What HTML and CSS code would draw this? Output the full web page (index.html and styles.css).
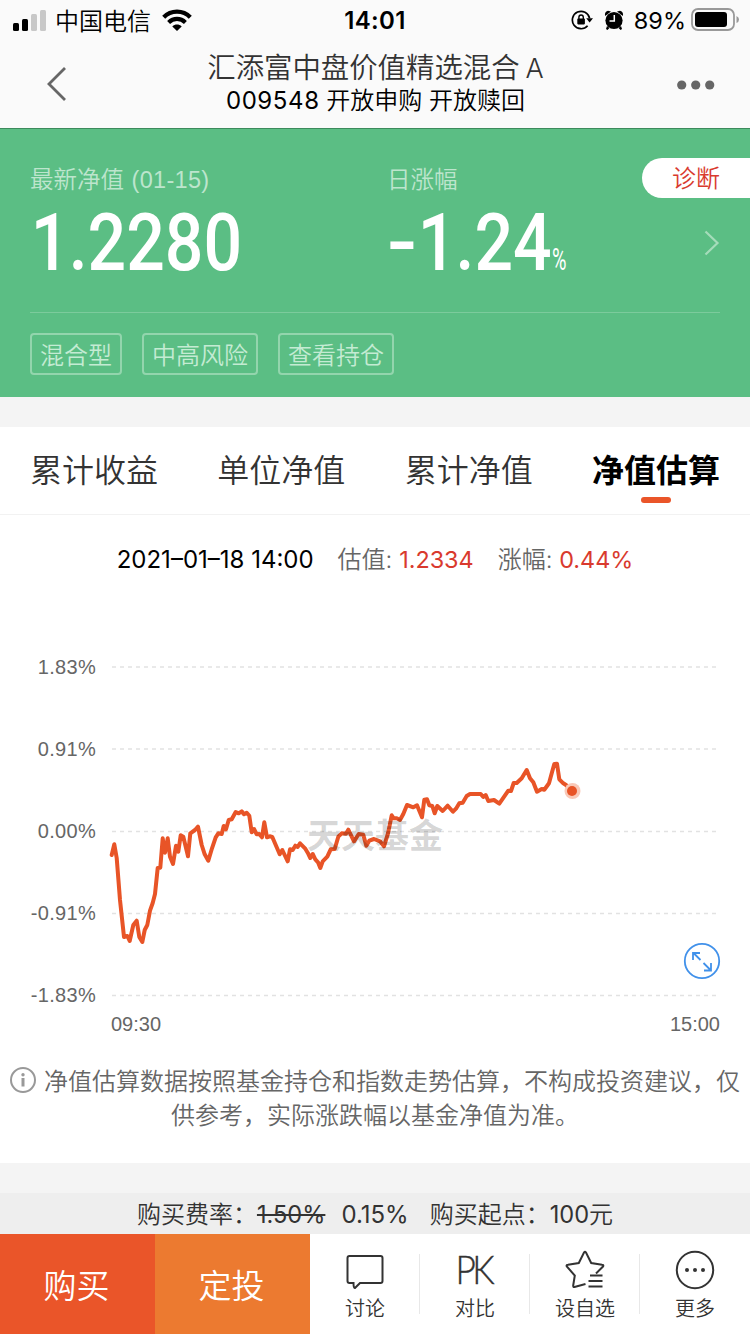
FILE: index.html
```html
<!DOCTYPE html>
<html lang="zh-CN">
<head>
  <meta charset="UTF-8" />
  <meta name="viewport" content="width=device-width, initial-scale=1.0"/>
  <title>汇添富中盘价值精选混合A</title>
  <link rel="stylesheet" href="styles.css">
</head>
<body>
  <div class="status-bar">
    <div class="status-left">
      <svg class="signal" width="34" height="22" viewBox="0 0 34 22">
        <rect x="0" y="14" width="6" height="8" rx="1.5"/>
        <rect x="9" y="10" width="6" height="12" rx="1.5"/>
        <rect x="18" y="5" width="6" height="17" rx="1.5" fill="#c8c8c8"/>
        <rect x="27" y="1" width="6" height="21" rx="1.5" fill="#c8c8c8"/>
      </svg>
      <span class="carrier">中国电信</span>
      <svg class="wifi" width="30" height="22" viewBox="0 0 30 22" fill="none" stroke="#000" stroke-width="4.2">
        <path d="M1.7 8.2C9 .7 21 .7 28.3 8.2"/>
        <path d="M6.6 13.4C11.4 8.8 18.6 8.8 23.4 13.4"/>
        <path d="M10.3 17.400C13 15 17 15 19.7 17.400L15 22Z" fill="#000" stroke="none"/>
      </svg>
    </div>
    <div class="clock">14:01</div>
    <div class="status-right">
      <svg width="22" height="20" viewBox="0 0 22 20">
        <path d="M16.6 15.8A8.7 8.7 0 1 1 18.6 8.2" fill="none" stroke="#000" stroke-width="1.7"/>
        <path d="M15.2 8.2H22L18.6 12.6Z"/>
        <rect x="6.3" y="8.6" width="7.6" height="5.8" rx=".8"/>
        <path d="M7.9 9V7.2a2.2 2.2 0 0 1 4.4 0V9" fill="none" stroke="#000" stroke-width="1.4"/>
      </svg>
      <svg class="alarm" width="20" height="20" viewBox="0 0 20 20">
        <circle cx="10" cy="10.5" r="8.6"/>
        <path d="M1.2 6Q0 2 4 .8L7 1.500ZM18.800 6Q20 2 16 .8L13 1.500ZM3 16l2.500 2L3.400 20 2 19ZM17 16l-2.500 2 2.100 2L18 19Z"/>
        <path d="M10.3 5V11H5.5" fill="none" stroke="#fff" stroke-width="1.5"/>
      </svg>
      <span class="percent">89%</span>
      <svg width="48" height="24" viewBox="0 0 48 24">
        <rect x="1" y="1" width="42" height="21" rx="6" fill="none" stroke="#999" stroke-width="1.8"/>
        <rect x="4" y="4" width="32" height="15" rx="3"/>
        <path d="M45.5 8Q48 9 48 11.500T45.500 15Z" fill="#999"/>
      </svg>
    </div>
  </div>

  <header class="nav">
    <svg class="back" width="20" height="36" viewBox="0 0 20 36" fill="none" stroke="#666" stroke-width="2.800">
      <path d="M18 2L2 18L18 34"/>
    </svg>
    <div class="nav-title">
      <h1>汇添富中盘价值精选混合<span class="share-class">A</span></h1>
      <p><span class="code">009548</span> 开放申购 开放赎回</p>
    </div>
    <svg class="dots" width="38" height="10" viewBox="0 0 38 10" fill="#666">
      <circle cx="4.700" cy="5" r="4.600"/>
      <circle cx="18.700" cy="5" r="4.600"/>
      <circle cx="32.700" cy="5" r="4.600"/>
    </svg>
  </header>

  <section class="hero">
    <div class="quote">
      <div class="quote-item">
        <div class="quote-label">最新净值 <span class="date">(01-15)</span></div>
        <div class="quote-value"><span class="din"><span class="int">1</span>.2280</span></div>
      </div>
      <div class="quote-item">
        <div class="quote-label">日涨幅</div>
        <div class="quote-value"><span class="din"><span class="minus">-</span><span class="int">1</span>.24<small>%</small></span></div>
      </div>
      <svg class="hero-arrow" width="16" height="26" viewBox="0 0 16 26" fill="none" stroke="#a5dcba" stroke-width="2.200">
        <path d="M1.500 1.500L13.500 13L1.500 24.500"/>
      </svg>
    </div>
    <div class="tags">
      <span class="tag">混合型</span>
      <span class="tag">中高风险</span>
      <span class="tag">查看持仓</span>
    </div>
    <a class="diagnose">诊断</a>
  </section>

  <nav class="tabs">
    <span class="tab">累计收益</span>
    <span class="tab">单位净值</span>
    <span class="tab">累计净值</span>
    <span class="tab active">净值估算</span>
  </nav>

  <section class="estimate">
    <div class="summary">
      <span class="time">2021–01–18 14:00</span>
      <span class="item">估值: <b>1.2334</b></span>
      <span class="item">涨幅: <b>0.44%</b></span>
    </div>

    <!-- intraday estimate, 09:30 - 15:00 -->
    <svg class="chart" width="750" height="440" viewBox="0 600 750 440">
      <g class="grid">
        <path d="M112 667H717"/>
        <path d="M112 749H717"/>
        <path d="M112 831.500H717"/>
        <path d="M112 913.500H717"/>
        <path d="M112 995.500H720"/>
      </g>
      <g class="axis">
        <text x="96" y="674" text-anchor="end">1.83%</text>
        <text x="96" y="756" text-anchor="end">0.91%</text>
        <text x="96" y="838" text-anchor="end">0.00%</text>
        <text x="96" y="920" text-anchor="end">-0.91%</text>
        <text x="96" y="1002" text-anchor="end">-1.83%</text>
        <text class="hour" x="111" y="1031">09:30</text>
        <text class="hour" x="720" y="1031" text-anchor="end">15:00</text>
      </g>
      <polyline class="line" points="111.700,855 114.300,844.300 116.700,858 120,900 124,937 127.300,936 129.700,941 133.300,925 136.700,920.700 139.300,937 142.300,942 144.700,930 147.300,925 150,910.700 152.700,903 155,894 157.700,868 160.300,867.700 162.700,838.300 165,852.700 167.700,838.300 170,856.700 173,864 176,845.700 178.300,851.700 180.700,835.300 183.300,836.700 188,856.300 190.300,833.300 195,830 198,826.700 201.700,845 204.700,854.300 208.300,860.700 212,848.300 215.700,837.300 218.300,833.300 221.700,834 223.700,826 226,829.300 228.700,820 231.700,819.300 235.700,812 238.700,813.300 241.700,811.300 244,814.300 246.700,812.700 249.300,815.700 251.700,832.300 254,829 256.700,834.300 259.300,834 262,837.300 264.300,822.300 267,837.300 269.700,836.300 272.300,837 276.700,847.300 279.700,854.300 282.300,850 287.700,861.300 290,849.300 292.700,850 295.300,845.700 297.700,847 300,843.300 305,848.300 307.700,852.700 310.300,858 312.700,854 315.300,859.300 318,862.300 320.300,868 322.700,861.300 327.300,856.700 330.700,849.300 334.700,849 338.300,836.700 341.700,833.300 346,833.700 348.300,829.700 354,841.300 358.700,834 363.300,834.700 366.300,845.700 369.300,840.700 374,839 380,841.300 384,846.300 388,833.300 391.700,815.300 393.700,818.300 396.700,818.300 400,820 403.300,814 407,805 413.300,807.300 417,805.300 422,817.300 424.300,799.700 427,799.300 429.300,805.300 432.300,806 434.700,813.300 437.300,806 442.700,811 447.700,805.700 453,811.700 456,808.700 459.300,803.300 462.700,802.700 466.700,796 470,794 480.700,794 483.300,797 485.700,795 488.300,801 494,800 499.300,803.700 508.300,790.700 511,791 513.700,783 516.700,783 521.700,778.300 526.700,770 530,778.300 533.300,782.300 537,791.700 541.700,789 544.300,789.700 549,783.300 552,772.300 554.300,764 557,763.700 559.300,779.300 563.300,783.300 566,785 571.700,791"/>
      <circle cx="572.500" cy="791" r="8" fill="#f9c9b8"/>
      <circle cx="572" cy="791" r="5" fill="#e85427"/>
      <text class="watermark" x="307" y="848">天天基金</text>
      <g class="expand">
        <circle cx="702" cy="961" r="17.200"/>
        <path d="M700.500 960L693.500 953M693 960V953H700M703.500 963L710.500 970M711 963V970.500H704"/>
      </g>
    </svg>

    <p class="notice"><svg class="info" width="26" height="26" viewBox="0 0 26 26"><circle cx="13" cy="13" r="12" fill="none" stroke="#999" stroke-width="2"/><rect x="11.500" y="11" width="3" height="8.500" fill="#999"/><circle cx="13" cy="7.700" r="1.700" fill="#999"/></svg>净值估算数据按照基金持仓和指数走势估算，不构成投资建议，仅<br>供参考，实际涨跌幅以基金净值为准。</p>
  </section>

  <div class="fee">
    <span>购买费率：<del>1.50%</del></span>
    <span class="rate">0.15%</span>
    <span>购买起点：<span class="num">100</span>元</span>
  </div>

  <footer class="actions">
    <button class="buy">购买</button>
    <button class="plan">定投</button>
    <div class="action">
      <svg width="40" height="40" viewBox="0 0 40 40">
        <path d="M4.500 6H35.500Q37.500 6 37.500 8V31Q37.500 33 35.500 33H15L10 38Q8.500 38 8.500 33H4.500Q2.500 33 2.500 31V8Q2.500 6 4.500 6Z"/>
      </svg>
      <span>讨论</span>
    </div>
    <div class="action">
      <div class="pk">PK</div>
      <span>对比</span>
    </div>
    <div class="action">
      <svg width="40" height="40" viewBox="0 0 40 40">
        <path d="M20.500 34L9.500 37Q8 37.200 8.200 35.500L9.800 25.500L1.800 16.500Q1 15 3 14.800L13.800 13L19 2.500Q20 1 21 2.500L26.200 13L37 14.800Q39 15 38 16.500L31 23.500"/>
        <path d="M25 25.500H37.500M23.500 31H37.500M23.500 36.500H37.500"/>
      </svg>
      <span>设自选</span>
    </div>
    <div class="action">
      <svg width="40" height="40" viewBox="0 0 40 40">
        <circle cx="20" cy="20" r="18.200"/>
        <g fill="#333" stroke="none"><circle cx="12" cy="20" r="2"/><circle cx="20" cy="20" r="2"/><circle cx="28" cy="20" r="2"/></g>
      </svg>
      <span>更多</span>
    </div>
  </footer>
</body>
</html>
```
FILE: styles.css
```css
:root {
  --green: #5bbe84;
  --orange: #ea5529;
  --red: #d93a2e;
  --text-color: #333333;
}

* {
  margin: 0;
  padding: 0;
  box-sizing: border-box;
}

body {
  width: 750px;
  height: 1334px;
  overflow: hidden;
  background: #f4f4f4;
  color: var(--text-color);
  font-family: Inter, 'Noto Sans CJK SC', sans-serif;
  font-size: 24px;
  font-weight: 350;
  display: flex;
  flex-direction: column;
}

svg {
  display: block;
  flex-shrink: 0;
}

.status-bar {
  height: 40px;
  padding: 0 11px 0 13px;
  background: #fafafa;
  color: #000;
  display: grid;
  grid-template-columns: 1fr auto 1fr;
  align-items: center;
  line-height: 36px;
}

.status-left,
.status-right {
  display: flex;
  align-items: center;
}

.status-right {
  justify-content: flex-end;
}

.carrier {
  margin: 0 11px 0 8px;
  padding-top: 3px;
}

.clock {
  padding-top: 2px;
  margin-right: 2px;
  font-weight: 600;
  font-size: 24px;
  letter-spacing: 0.3px;
}

.alarm {
  margin: 0 10px 0 11px;
}

.percent {
  margin-right: 5px;
  padding-top: 2px;
  font-size: 23.5px;
  font-weight: 400;
}

.nav {
  height: 88px;
  padding: 0 35px 0 47px;
  background: #fafafa;
  display: flex;
  justify-content: space-between;
}

.back {
  margin-top: 26px;
}

.dots {
  margin-top: 40px;
}

.nav-title {
  padding: 10px 0 0 7px;
  text-align: center;
}

h1 {
  font-size: 28.4px;
  font-weight: 350;
  line-height: 36px;
}

.share-class {
  margin-left: 6px;
  font-size: 27px;
}

.nav-title p {
  font-size: 24px;
  line-height: 28px;
  color: #000;
}

.code {
  font-weight: 400;
  letter-spacing: 0.6px;
}

.hero {
  position: relative;
  height: 269px;
  padding: 0 30px;
  background: var(--green);
  border-top: 1px solid #3d8a5c;
}

.quote {
  height: 184px;
  padding-top: 33px;
  border-bottom: 1px solid #7ccb9c;
  display: grid;
  grid-template-columns: 357px 1fr 16px;
}

.quote-label {
  font-family: 'Liberation Sans', 'Noto Sans CJK SC', sans-serif;
  font-size: 23.5px;
  line-height: 37px;
  color: #bde5cd;
}

.date {
  margin-left: 1px;
  letter-spacing: 0.3px;
}

.quote-value {
  height: 88px;
  color: #fff;
}

/* condensed figures */
.din {
  display: inline-block;
  font-family: Roboto, sans-serif;
  font-size: 80px;
  font-weight: 500;
  line-height: 88px;
  transform: scaleX(0.85);
  transform-origin: left;
  white-space: nowrap;
}

.int {
  margin: 0 -1px 0 1px;
}

.minus {
  display: inline-block;
  margin-right: 8px;
  transform: scaleX(1.3);
  transform-origin: left;
}

.din small {
  font-size: 31px;
  font-weight: 400;
  display: inline-block;
  transform: scaleX(0.75);
  transform-origin: left;
}

.hero-arrow {
  margin: 68px 0 0 0;
}

.tags {
  display: flex;
  gap: 20px;
  padding-top: 20px;
}

.tag {
  height: 42px;
  padding: 0 8px;
  border: 2px solid #93d5ad;
  border-radius: 4px;
  color: #c4ebd3;
  line-height: 41px;
}

/* pill hanging on the right edge of the hero */
.diagnose {
  position: absolute;
  top: 29px;
  right: 0;
  width: 108px;
  height: 40px;
  padding-left: 30px;
  border-radius: 20px 0 0 20px;
  background: #fff;
  color: var(--red);
  line-height: 41px;
}

.tabs {
  height: 88px;
  margin-top: 30px;
  padding: 0 30px;
  background: #fff;
  border-bottom: 1px solid #f2f2f2;
  display: flex;
  justify-content: space-between;
}

.tab {
  font-size: 32px;
  line-height: 88px;
}

.tab.active {
  color: #000;
  font-weight: 700;
  display: flex;
  flex-direction: column;
  align-items: center;
}

.tab.active::after {
  content: '';
  width: 30px;
  height: 6px;
  margin-top: -18px;
  border-radius: 3px;
  background: var(--orange);
}

.estimate {
  height: 648px;
  background: #fff;
}

.summary {
  height: 85px;
  padding: 26px 0 0 0;
  display: flex;
  justify-content: center;
  gap: 24px;
  line-height: 38px;
}

.time {
  color: #000;
  font-weight: 400;
}

.item {
  color: #666;
}

.item b {
  color: var(--red);
  font-size: 23.4px;
  font-weight: 400;
}

.grid path {
  stroke: #e2e2e2;
  stroke-width: 1.6;
  stroke-dasharray: 4 4;
}

.axis text {
  font-family: 'Liberation Sans', sans-serif;
  font-size: 20px;
  letter-spacing: 0.3px;
  fill: #666;
}

.axis .hour {
  letter-spacing: 0;
}

.line {
  fill: none;
  stroke: #e85427;
  stroke-width: 4;
  stroke-linejoin: round;
  stroke-linecap: round;
}

.watermark {
  font-family: 'Noto Sans CJK SC', sans-serif;
  font-size: 34px;
  font-weight: 700;
  fill: #000;
  fill-opacity: 0.17;
}

.expand {
  fill: none;
  stroke: #4191ea;
  stroke-width: 1.8;
}

.notice {
  padding-top: 25px;
  font-size: 24px;
  line-height: 34px;
  color: #666;
  text-align: center;
  white-space: nowrap;
}

.info {
  display: inline-block;
  margin-right: 8px;
  vertical-align: -3px;
}

.fee {
  height: 41px;
  margin-top: 30px;
  background: #eee;
  display: flex;
  justify-content: center;
  line-height: 43px;
}

.fee del,
.num {
  font-size: 23.6px;
  font-weight: 400;
}

.rate {
  margin: 0 21px 0 16px;
  font-weight: 400;
}

.actions {
  height: 100px;
  background: #fff;
  display: grid;
  grid-template-columns: 155px 155px repeat(4, 1fr);
}

.actions button {
  padding-right: 2px;
  border: none;
  color: #fff;
  font-family: inherit;
  font-size: 33px;
  font-weight: 350;
}

.buy {
  background: #ea5529;
}

.plan {
  background: #ec7a30;
}

.action {
  height: 60px;
  margin: 20px 0 0 -1px;
  border-left: 1px solid #e8e8e8;
  display: flex;
  flex-direction: column;
  align-items: center;
  font-size: 20px;
}

.plan + .action {
  border-left-color: transparent;
}

.action svg,
.pk {
  margin-top: -4px;
  height: 40px;
  flex-shrink: 0;
}

.action svg {
  fill: none;
  stroke: #333;
  stroke-width: 2;
}

.pk {
  font-family: Lato, sans-serif;
  font-size: 40px;
  font-weight: 300;
  line-height: 38px;
  letter-spacing: -4px;
  transform: translateX(-2px) scaleX(0.88);
  -webkit-text-stroke: 0.4px #333;
}

.action span {
  line-height: 38px;
}
```
